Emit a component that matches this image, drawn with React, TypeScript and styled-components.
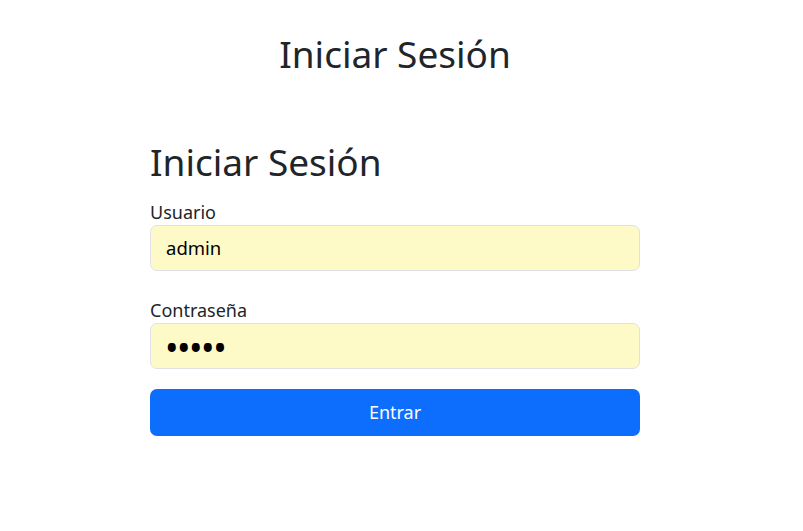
import styled, { createGlobalStyle } from 'styled-components';

const GlobalStyle = createGlobalStyle`
  body {
    margin: 0;
    background: #ffffff;
    color: #212529;
    font-family: "Noto Sans", "Open Sans", sans-serif;
  }
`;

const Page = styled.div`
  padding: 32px 13px 0 0;
  display: flex;
  flex-direction: column;
  align-items: center;
`;

const Title = styled.h1`
  margin: 0 0 64px;
  font-size: 37px;
  font-weight: 400;
  line-height: 1.2;
`;

const Card = styled.form`
  width: 490px;
  display: flex;
  flex-direction: column;
`;

const FormTitle = styled.h2`
  margin: 0 0 14px;
  font-size: 37px;
  font-weight: 400;
  line-height: 1.2;
`;

const Field = styled.div`
  display: flex;
  flex-direction: column;

  & + & {
    margin-top: 26px;
  }
`;

const Label = styled.label`
  font-size: 18px;
  line-height: 26px;
`;

const TextInput = styled.input<{ $secret?: boolean }>`
  box-sizing: border-box;
  height: 46px;
  padding: ${(p) => (p.$secret ? '3px 14px 0' : '0 15px')};
  border: 1px solid #dee2e6;
  border-radius: 7px;
  background: #fefac8;
  color: #000;
  font-family: inherit;
  font-size: ${(p) => (p.$secret ? '36px' : '18.5px')};
  letter-spacing: ${(p) => (p.$secret ? '-1.5px' : 'normal')};

  &:focus {
    outline: none;
  }
`;

const SubmitButton = styled.button`
  height: 47px;
  margin-top: 20px;
  border: none;
  border-radius: 7px;
  background: #0d6efd;
  color: #ffffff;
  font-family: inherit;
  font-size: 18px;
  cursor: pointer;
`;

export default function App() {
  return (
    <>
      <GlobalStyle />
      <Page>
        <Title>Iniciar Sesión</Title>
        <Card onSubmit={(e) => e.preventDefault()}>
          <FormTitle>Iniciar Sesión</FormTitle>
          <Field>
            <Label htmlFor="usuario">Usuario</Label>
            <TextInput id="usuario" type="text" defaultValue="admin" />
          </Field>
          <Field>
            <Label htmlFor="clave">Contraseña</Label>
            <TextInput id="clave" type="password" defaultValue="admin" $secret />
          </Field>
          <SubmitButton type="submit">Entrar</SubmitButton>
        </Card>
      </Page>
    </>
  );
}
